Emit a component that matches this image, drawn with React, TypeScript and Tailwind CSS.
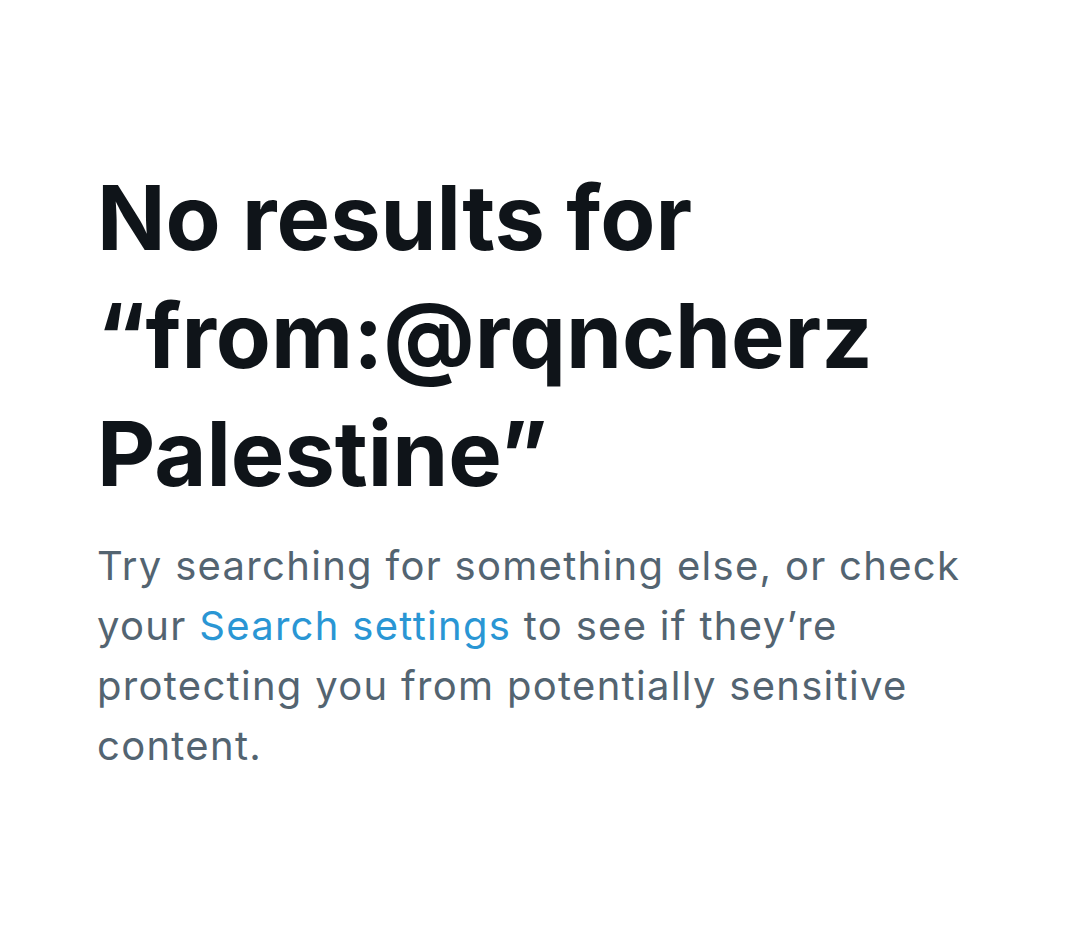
export default function App() {
  return (
    <div className="min-h-[931px] w-[1080px] bg-white" style={{ fontFamily: "Inter, 'Noto Sans', sans-serif" }}>
      <div className="pl-[97px] pr-[60px] pt-[159px]">
        <h1 className="text-[90px] font-bold leading-[118px] tracking-[0px] text-[#0f1419]">
          No results for “from:@rqncherz Palestine”
        </h1>
        <p className="mt-[23px] max-w-[880px] text-[40px] leading-[60px] tracking-[1.3px] text-[#536471]">
          Try searching for something else, or check your{" "}
          <span className="text-[#2a96d4]">Search settings</span> to see if they’re protecting you from potentially
          sensitive content.
        </p>
      </div>
    </div>
  );
}
